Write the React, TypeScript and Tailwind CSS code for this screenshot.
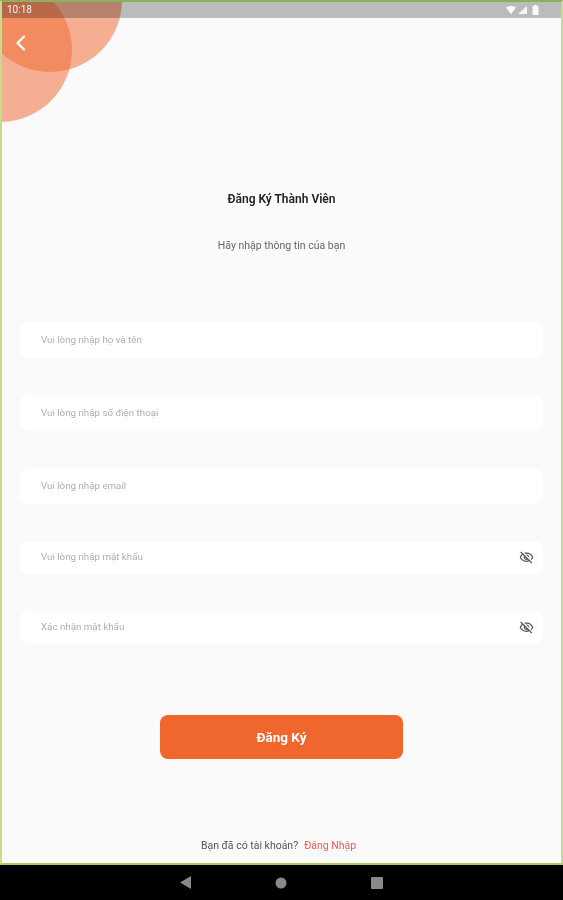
import { MdOutlineVisibilityOff } from 'react-icons/md'

const fields = [
  { label: 'Vui lòng nhập họ và tên', box: 'h-[36px] mt-[68px]' },
  { label: 'Vui lòng nhập số điện thoại', box: 'h-[36px] mt-[37px]' },
  { label: 'Vui lòng nhập email', box: 'h-[36px] mt-[37px]' },
  { label: 'Vui lòng nhập mật khẩu', box: 'h-[33px] mt-[37px]', secret: true },
  { label: 'Xác nhận mật khẩu', box: 'h-[33px] mt-[37px]', secret: true },
]

export default function App() {
  return (
    <div className="relative flex h-[900px] w-[563px] flex-col overflow-hidden bg-black font-['Roboto',sans-serif]">
      {/* Screen with the green edge */}
      <div className="relative flex h-[865px] flex-col overflow-hidden border-x-2 border-y-2 border-x-[#c5dc8f] border-t-[#8fae62] border-b-[#a9cc52] bg-[#fafafa]">
        {/* Corner circles */}
        <div className="absolute left-[-74px] top-[-24px] h-[144px] w-[144px] rounded-full bg-[#f0703a]/55" />
        <div className="absolute left-[-24px] top-[-74px] h-[144px] w-[144px] rounded-full bg-[#f0703a]/55" />

        {/* Status bar */}
        <div className="relative flex h-[16px] shrink-0 items-center justify-between bg-black/25 pl-[5px] pr-[22px]">
          <span className="text-[10px] leading-none text-[#f4f4f4] blur-[0.3px]">10:18</span>
          <div className="flex items-center gap-[2px] blur-[0.3px]">
            <svg width="10" height="8" viewBox="0 0 10 8">
              <path d="M0 1.5C3 -.5 7 -.5 10 1.5L5 8Z" fill="#fff" />
            </svg>
            <svg width="9" height="8" viewBox="0 0 9 8">
              <path d="M9 0V8H0Z" fill="#fff" opacity="0.85" />
            </svg>
            <svg width="7" height="10" viewBox="0 0 7 10" className="ml-[3px]">
              <path d="M2 0H5V1H6.5V10H.5V1H2Z" fill="#fff" opacity="0.9" />
            </svg>
          </div>
        </div>

        {/* Back */}
        <div className="relative mt-[13px] flex h-[24px] items-center pl-[11px]">
          <svg width="16" height="22" viewBox="0 0 16 22" fill="none" stroke="#fff" strokeWidth="2.2" strokeLinecap="round" strokeLinejoin="round">
            <path d="M11 4.5L4.5 11L11 17.5" />
          </svg>
        </div>

        {/* Heading */}
        <h1 className="mt-[136px] text-center text-[12px] font-semibold leading-[16px] text-[#222] blur-[0.4px]">Đăng Ký Thành Viên</h1>
        <p className="mt-[31px] text-center text-[10.5px] leading-[16px] text-[#666] blur-[0.4px]">Hãy nhập thông tin của bạn</p>

        {/* Fields */}
        <div className="mx-[18px] flex flex-col">
          {fields.map((f) => (
            <div key={f.label} className={`flex items-center justify-between rounded-[8px] bg-white pl-[21px] pr-[9px] ${f.box}`}>
              <span className="text-[9.75px] text-[#adadad] blur-[0.4px]">{f.label}</span>
              {f.secret && <MdOutlineVisibilityOff size={15} className="text-[#555] blur-[0.3px]" />}
            </div>
          ))}
        </div>

        {/* Submit */}
        <button className="mx-auto mt-[71px] flex h-[44px] w-[243px] items-center justify-center rounded-[8px] bg-[#ef672c] text-[13.5px] font-bold text-white">
          <span className="blur-[0.3px]">Đăng Ký</span>
        </button>

        {/* Login link */}
        <div className="mt-[79px] flex justify-center gap-[6px] pr-[6px] text-[10.5px] leading-[16px] blur-[0.4px]">
          <span className="text-[#555]">Bạn đã có tài khoản?</span>
          <span className="text-[#ee5a4f]">Đăng Nhập</span>
        </div>
      </div>

      {/* Navigation bar */}
      <div className="flex h-[35px] items-center justify-between bg-black pl-[180px] pr-[180px]">
        <svg width="11" height="13" viewBox="0 0 11 13">
          <path d="M11 0V13L0 6.5Z" fill="#8a8a8a" />
        </svg>
        <svg width="12" height="12" viewBox="0 0 12 12">
          <circle cx="6" cy="6" r="5.5" fill="#8a8a8a" />
        </svg>
        <svg width="12" height="12" viewBox="0 0 12 12">
          <rect width="12" height="12" rx="1" fill="#8a8a8a" />
        </svg>
      </div>
    </div>
  )
}
